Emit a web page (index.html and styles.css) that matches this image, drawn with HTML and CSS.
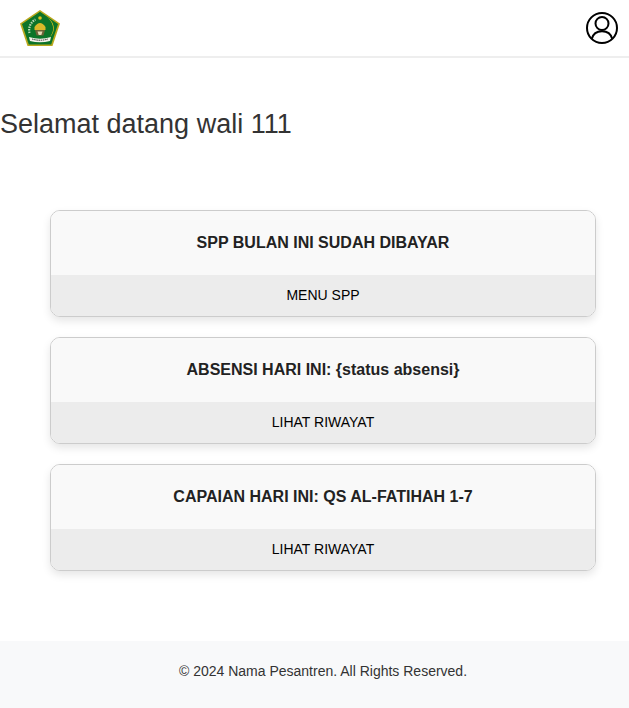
FILE: index.html
```html
<!DOCTYPE html>
<html lang="id">
<head>
<meta charset="utf-8">
<title>Dashboard Wali</title>
<link rel="stylesheet" href="styles.css">
</head>
<body>
<header class="topbar">
  <svg class="logo" viewBox="0 0 40 36" width="40" height="36" aria-label="Logo">
    <polygon points="20,0 40,13.5 32.5,36 7.5,36 0,13.5" fill="#b9a81e"/>
    <polygon points="20,1.8 38,14 31.2,34.4 8.8,34.4 2,14" fill="#0c7429"/>
    <path d="M26 7 A12 12 0 0 1 30 27 A13 13 0 0 0 26 7Z" fill="#e0c21e"/>
    <circle cx="20" cy="8" r="1.8" fill="#e0c21e"/>
    <path d="M9.5 23 A12 12 0 0 1 15.5 9.5" fill="none" stroke="#bcd8b4" stroke-width="2.2" stroke-dasharray="1.5 1"/>
    <path d="M14.5 17 Q20 9 25.5 17 L25.5 20 L14.5 20Z" fill="#d9b92a"/>
    <path d="M15 20 H25 L23.5 25.5 H16.5Z" fill="#6d6238"/>
    <path d="M17.5 21.5 H22.5 L21.3 25 H18.7Z" fill="#e6dcba"/>
    <path d="M9 27 Q20 30.5 31 27 L30 31 Q20 33.5 10 31Z" fill="#f3f3ea"/>
    <path d="M12 29 Q20 31.5 28 29" fill="none" stroke="#333" stroke-width="1" stroke-dasharray="1.5 .7"/>
  </svg>
  <svg class="avatar" viewBox="0 0 32 32" width="32" height="32" fill="none" stroke="#000" stroke-width="2" aria-label="Profil">
    <circle cx="16" cy="16" r="15"/>
    <circle cx="16" cy="11.5" r="6.5"/>
    <path d="M5.8 26.8 C7 22 11 19.2 16 19.2 C21 19.2 25 22 26.2 26.8"/>
  </svg>
</header>
<main class="content">
  <h1 class="welcome">Selamat datang wali 111</h1>
  <section class="cards">
    <article class="card">
      <div class="card-title">SPP BULAN INI SUDAH DIBAYAR</div>
      <a class="card-link">MENU SPP</a>
    </article>
    <article class="card">
      <div class="card-title">ABSENSI HARI INI: {status absensi}</div>
      <a class="card-link">LIHAT RIWAYAT</a>
    </article>
    <article class="card">
      <div class="card-title">CAPAIAN HARI INI: QS AL-FATIHAH 1-7</div>
      <a class="card-link">LIHAT RIWAYAT</a>
    </article>
  </section>
</main>
<footer class="footer">© 2024 Nama Pesantren. All Rights Reserved.</footer>
</body>
</html>
```
FILE: styles.css
```css
* {
  box-sizing: border-box;
}
html, body {
  margin: 0;
  padding: 0;
}
body {
  font-family: "Liberation Sans", Arial, sans-serif;
  color: #333;
  background: #fff;
  min-height: 708px;
  display: flex;
  flex-direction: column;
}
.topbar {
  height: 58px;
  display: flex;
  justify-content: space-between;
  align-items: center;
  padding: 0 11px 0 20px;
  border-bottom: 2px solid #eee;
}
.logo {
  display: block;
}
.avatar {
  display: block;
}
.content {
  flex: 1;
}
.welcome {
  margin: 50px 0 0;
  font-size: 27px;
  line-height: 32px;
  font-weight: 400;
  color: #333;
}
.cards {
  display: flex;
  flex-direction: column;
  gap: 20px;
  margin: 70px 33px 0 50px;
}
.card {
  height: 107px;
  border: 1px solid #ccc;
  border-radius: 10px;
  overflow: hidden;
  display: flex;
  flex-direction: column;
  box-shadow: 0 4px 8px rgba(0, 0, 0, 0.1);
}
.card-title {
  height: 64px;
  display: flex;
  align-items: center;
  justify-content: center;
  background: #f9f9f9;
  font-size: 16px;
  font-weight: 700;
  color: #222;
}
.card-link {
  flex: 1;
  display: flex;
  align-items: center;
  justify-content: center;
  padding-bottom: 2px;
  background: #ececec;
  font-size: 14px;
  color: #000;
}
.footer {
  height: 67px;
  display: flex;
  align-items: center;
  justify-content: center;
  padding: 0 0 8px 17px;
  background: #f8f9fa;
  font-size: 14px;
  color: #333;
}
```
